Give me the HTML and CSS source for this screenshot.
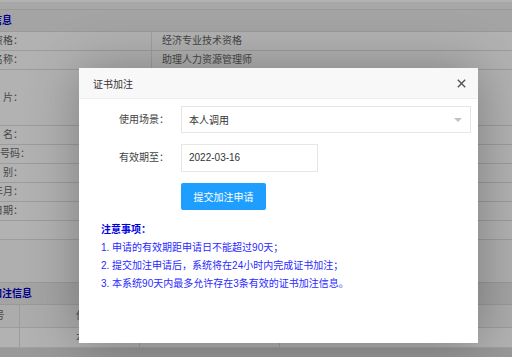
FILE: index.html
```html
<!DOCTYPE html>
<html lang="zh-CN">
<head>
<meta charset="utf-8">
<title>证书加注</title>
<link rel="stylesheet" href="styles.css">
</head>
<body>
<div class="page">
  <div class="top-strip"></div>
  <div class="top-gap"></div>
  <div class="sec">基本信息</div>
  <div class="row"><div class="lbl">职业资格：</div><div class="val">经济专业技术资格</div></div>
  <div class="row"><div class="lbl">职称名称：</div><div class="val">助理人力资源管理师</div></div>
  <div class="row row-photo"><div class="lbl">照&nbsp;&nbsp;&nbsp;&nbsp;片：</div><div class="val"></div></div>
  <div class="row"><div class="lbl">姓&nbsp;&nbsp;&nbsp;&nbsp;名：</div><div class="val">张三</div></div>
  <div class="row"><div class="lbl">身份证号码：</div><div class="val">110101199001010000</div></div>
  <div class="row"><div class="lbl">性&nbsp;&nbsp;&nbsp;&nbsp;别：</div><div class="val">男</div></div>
  <div class="row"><div class="lbl">出生年月：</div><div class="val">1990-01</div></div>
  <div class="row"><div class="lbl">有效日期：</div><div class="val">2022-03-16</div></div>
  <div class="row"><div class="lbl"></div><div class="val"></div></div>
  <div class="gap"></div>
  <div class="sec">证书加注信息</div>
  <div class="thead">
    <div class="th th-no">序号</div>
    <div class="th th-scene">使用场景</div>
    <div class="th">有效期至</div>
    <div class="th">状态</div>
  </div>
  <div class="trow">
    <div class="td th-no">1</div>
    <div class="td th-scene">本人调用</div>
    <div class="td">2022-03-16</div>
    <div class="td">已生效</div>
  </div>
</div>

<div class="mask"></div>

<div class="dialog">
  <div class="dialog-head">
    <span class="dialog-title">证书加注</span>
    <svg class="close" width="9" height="9" viewBox="0 0 9 9"><path d="M0.8 0.8 L8.2 8.2 M8.2 0.8 L0.8 8.2" stroke="#555" stroke-width="1.4" fill="none"/></svg>
  </div>
  <div class="dialog-body">
    <div class="form-row">
      <label class="form-label">使用场景：</label>
      <div class="select"><span>本人调用</span><i class="caret"></i></div>
    </div>
    <div class="form-row">
      <label class="form-label">有效期至：</label>
      <div class="input">2022-03-16</div>
    </div>
    <div class="form-row">
      <span class="form-label"></span>
      <button class="btn">提交加注申请</button>
    </div>
    <div class="notes">
      <div class="notes-title">注意事项：</div>
      <div class="note">1. 申请的有效期距申请日不能超过90天；</div>
      <div class="note">2. 提交加注申请后，系统将在24小时内完成证书加注；</div>
      <div class="note">3. 本系统90天内最多允许存在3条有效的证书加注信息。</div>
    </div>
  </div>
</div>
</body>
</html>
```

FILE: styles.css
```css
html, body {
  margin: 0;
  padding: 0;
}
body {
  width: 512px;
  height: 357px;
  overflow: hidden;
  position: relative;
  background: #dcdcdc;
  font-family: "Liberation Sans", "Noto Sans CJK TC", "Noto Sans CJK SC", sans-serif;
  font-size: 10px;
  color: #333;
}
.page {
  margin-left: -30px;
  width: 560px;
  background: #f0f0f0;
}
.top-strip {
  height: 2px;
  background: #fff;
}
.top-gap {
  height: 7px;
  background: #efefef;
}
.sec {
  height: 21px;
  line-height: 21px;
  padding-left: 2px;
  background: #ebebeb;
  border-top: 1px solid #dcdcdc;
  border-bottom: 1px solid #dcdcdc;
  color: #0000c8;
  font-weight: bold;
}
.row {
  display: grid;
  grid-template-columns: 182px 1fr;
  height: 18px;
  line-height: 18px;
  background: #fff;
  border-bottom: 1px solid #e0e0e0;
}
.row-photo {
  height: 55px;
  line-height: 55px;
}
.lbl {
  text-align: right;
  padding-right: 128px;
  white-space: nowrap;
  color: #666;
  border-right: 1px solid #e6e6e6;
}
.val {
  padding-left: 10px;
  color: #666;
  white-space: nowrap;
}
.gap {
  height: 42px;
  background: #fbfbfb;
}
.thead, .trow {
  display: grid;
  grid-template-columns: 50px 120px 140px 1fr;
  height: 22px;
  line-height: 22px;
  background: #f6f6f6;
  border-bottom: 1px solid #e0e0e0;
}
.trow {
  height: 19px;
  line-height: 19px;
  background: #fff;
  border-bottom: 1px solid #e6e6e6;
}
.th, .td {
  border-right: 1px solid #e0e0e0;
  color: #666;
  white-space: nowrap;
  overflow: hidden;
}
.th-no {
  text-align: center;
}
.th-scene {
  padding-left: 56px;
}
.mask {
  position: absolute;
  inset: 0;
  background: rgba(0, 0, 0, 0.3);
}
.dialog {
  position: absolute;
  left: 79px;
  top: 68px;
  width: 399px;
  height: 275px;
  background: #fff;
  box-shadow: 1px 1px 50px rgba(0, 0, 0, 0.3);
}
.dialog-head {
  height: 30px;
  display: flex;
  align-items: center;
  justify-content: space-between;
  padding: 0 12px 0 14px;
  background: #f8f8f8;
  border-bottom: 1px solid #eee;
}
.dialog-title {
  color: #333;
}
.close {
  display: block;
}
.dialog-body {
  padding-top: 7px;
}
.form-row {
  display: grid;
  grid-template-columns: 102px auto;
  justify-content: start;
  margin-bottom: 11px;
}
.form-label {
  text-align: right;
  padding-right: 12px;
  line-height: 27px;
  color: #444;
}
.select {
  box-sizing: border-box;
  width: 290px;
  height: 27px;
  border: 1px solid #e6e6e6;
  display: flex;
  align-items: center;
  justify-content: space-between;
  padding: 0 8px 0 7px;
  color: #333;
}
.caret {
  width: 0;
  height: 0;
  border-top: 4px solid #c2c2c2;
  border-left: 4px solid transparent;
  border-right: 4px solid transparent;
}
.input {
  box-sizing: border-box;
  width: 137px;
  height: 28px;
  line-height: 26px;
  border: 1px solid #e6e6e6;
  padding-left: 7px;
  color: #333;
}
.btn {
  width: 85px;
  height: 27px;
  border: 0;
  border-radius: 2px;
  background: #1e9fff;
  color: #fff;
  font-family: inherit;
  font-size: 10px;
  padding: 0;
}
.notes {
  padding-left: 22px;
  margin-top: 1px;
  color: #2a2aff;
}
.notes-title {
  line-height: 18px;
  font-weight: bold;
  color: #0000e0;
}
.note {
  line-height: 18px;
}
```
